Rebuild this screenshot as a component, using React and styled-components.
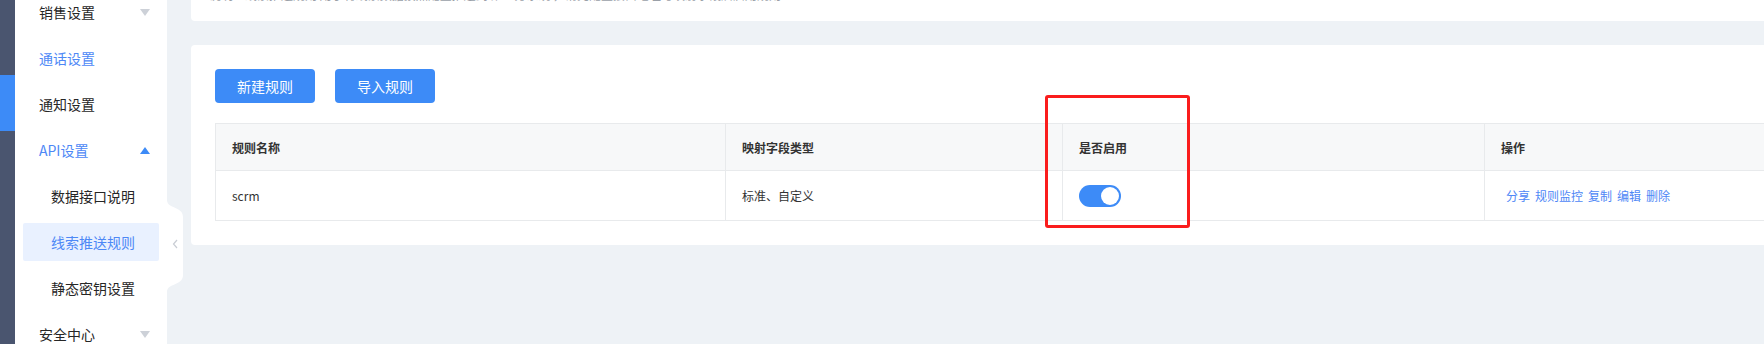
import styled, { createGlobalStyle } from "styled-components";

const GlobalStyle = createGlobalStyle`
  html, body {
    margin: 0;
    padding: 0;
    height: 344px;
    overflow: hidden;
    background: #eef2f6;
    font-family: "Noto Sans CJK SC", "Noto Sans", sans-serif;
  }
`;

const Page = styled.div`
  display: flex;
  width: 1764px;
  height: 344px;
  overflow: hidden;
`;

const Rail = styled.div`
  width: 15px;
  flex-shrink: 0;
  background: #4a556f;
  padding-top: 75px;
  box-sizing: border-box;
`;

const RailMarker = styled.div`
  height: 56px;
  background: #3d8bf7;
`;

const Sidebar = styled.aside`
  position: relative;
  width: 152px;
  flex-shrink: 0;
  background: #fff;
`;

const Menu = styled.ul`
  list-style: none;
  margin: -11px 0 0;
  padding: 0;
`;

const MenuItem = styled.li`
  display: flex;
  align-items: center;
  justify-content: space-between;
  height: ${(p) => (p.$active ? "38px" : "46px")};
  margin: ${(p) => (p.$active ? "4px 8px" : "0")};
  padding: 0 17px 0 ${(p) => (p.$active ? "28px" : p.$sub ? "36px" : "24px")};
  background: ${(p) => (p.$active ? "#e9f1ff" : "transparent")};
  border-radius: 2px;
  font-size: 14px;
  color: ${(p) => (p.$blue ? "#4d88f6" : "#262626")};
  white-space: nowrap;
`;

const Caret = styled.span`
  width: 0;
  height: 0;
  border-left: 5px solid transparent;
  border-right: 5px solid transparent;
  ${(p) =>
    p.$up
      ? "border-bottom: 7px solid #3d8bf7;"
      : "border-top: 7px solid #cdd1d8;"}
`;

const Handle = styled.svg`
  position: absolute;
  left: 100%;
  top: 200px;
`;

const Main = styled.main`
  flex: 1;
  display: flex;
  flex-direction: column;
  gap: 24px;
  padding-left: 24px;
  min-width: 0;
`;

const Card = styled.section`
  position: relative;
  background: #fff;
  border-radius: 4px;
  margin-right: -8px;
  box-sizing: border-box;
`;

const TopCard = styled(Card)`
  height: 21px;
  overflow: hidden;
  border-radius: 0 0 4px 4px;
  padding-left: 18px;
`;

const Notice = styled.div`
  margin-top: -12px;
  font-size: 12px;
  line-height: 14px;
  color: #9aa0a8;
  white-space: nowrap;
`;

const RuleCard = styled(Card)`
  height: 200px;
  padding: 24px 0 0 24px;
`;

const Toolbar = styled.div`
  display: flex;
  gap: 20px;
  margin-bottom: 20px;
`;

const Button = styled.button`
  width: 100px;
  height: 34px;
  border: none;
  border-radius: 4px;
  background: #3d8bf7;
  color: #fff;
  font-family: inherit;
  font-size: 14px;
  cursor: pointer;
`;

const Table = styled.table`
  width: 100%;
  border-collapse: collapse;
  table-layout: fixed;
  font-size: 12px;
  color: #333;
`;

const Th = styled.th`
  height: 46px;
  padding: 0 16px;
  background: #f7f8f9;
  border: 1px solid #e8eaec;
  text-align: left;
  font-weight: 600;
`;

const Td = styled.td`
  height: 49px;
  padding: 0 16px;
  border: 1px solid #e8eaec;
`;

const Switch = styled.span`
  display: flex;
  justify-content: flex-end;
  align-items: center;
  width: 42px;
  height: 22px;
  padding: 2px;
  box-sizing: border-box;
  border-radius: 11px;
  background: #3d8bf7;
  &::after {
    content: "";
    width: 18px;
    height: 18px;
    border-radius: 50%;
    background: #fff;
  }
`;

const ActionLink = styled.a`
  margin-left: 5px;
  color: #4e87f6;
  text-decoration: none;
  cursor: pointer;
`;

const Highlight = styled.div`
  position: absolute;
  left: 854px;
  top: 50px;
  width: 145px;
  height: 133px;
  box-sizing: border-box;
  border: 3px solid #fa1d1d;
  border-radius: 3px;
  pointer-events: none;
`;

const menu = [
  { label: "销售设置", caret: "down" },
  { label: "通话设置", blue: true },
  { label: "通知设置" },
  { label: "API设置", blue: true, caret: "up" },
  { label: "数据接口说明", sub: true },
  { label: "线索推送规则", sub: true, blue: true, active: true },
  { label: "静态密钥设置", sub: true },
  { label: "安全中心", caret: "down" },
];

const actions = ["分享", "规则监控", "复制", "编辑", "删除"];

export default function App() {
  return (
    <>
      <GlobalStyle />
      <Page>
        <Rail>
          <RailMarker />
        </Rail>
        <Sidebar>
          <Menu>
            {menu.map((m) => (
              <MenuItem key={m.label} $sub={m.sub} $blue={m.blue} $active={m.active}>
                {m.label}
                {m.caret && <Caret $up={m.caret === "up"} />}
              </MenuItem>
            ))}
          </Menu>
          <Handle width="16" height="92" viewBox="0 0 16 92">
            <path d="M0 0 C0 9 16 6 16 17 L16 75 C16 86 0 83 0 92 Z" fill="#fff" />
            <path d="M10 40 L6.5 44 L10 48" fill="none" stroke="#c9cdd4" strokeWidth="1.2" />
          </Handle>
        </Sidebar>
        <Main>
          <TopCard>
            <Notice>
              说明：线索推送规则 用于将线索数据按照配置推送到 第三方系统 ，请先配置接口地址与映射字段后启用规则
            </Notice>
          </TopCard>
          <RuleCard>
            <Toolbar>
              <Button>新建规则</Button>
              <Button>导入规则</Button>
            </Toolbar>
            <Table>
              <colgroup>
                <col style={{ width: 510 }} />
                <col style={{ width: 337 }} />
                <col style={{ width: 422 }} />
                <col />
              </colgroup>
              <thead>
                <tr>
                  <Th>规则名称</Th>
                  <Th>映射字段类型</Th>
                  <Th>是否启用</Th>
                  <Th>操作</Th>
                </tr>
              </thead>
              <tbody>
                <tr>
                  <Td>scrm</Td>
                  <Td>标准、自定义</Td>
                  <Td>
                    <Switch />
                  </Td>
                  <Td>
                    {actions.map((a) => (
                      <ActionLink key={a}>{a}</ActionLink>
                    ))}
                  </Td>
                </tr>
              </tbody>
            </Table>
            <Highlight />
          </RuleCard>
        </Main>
      </Page>
    </>
  );
}
